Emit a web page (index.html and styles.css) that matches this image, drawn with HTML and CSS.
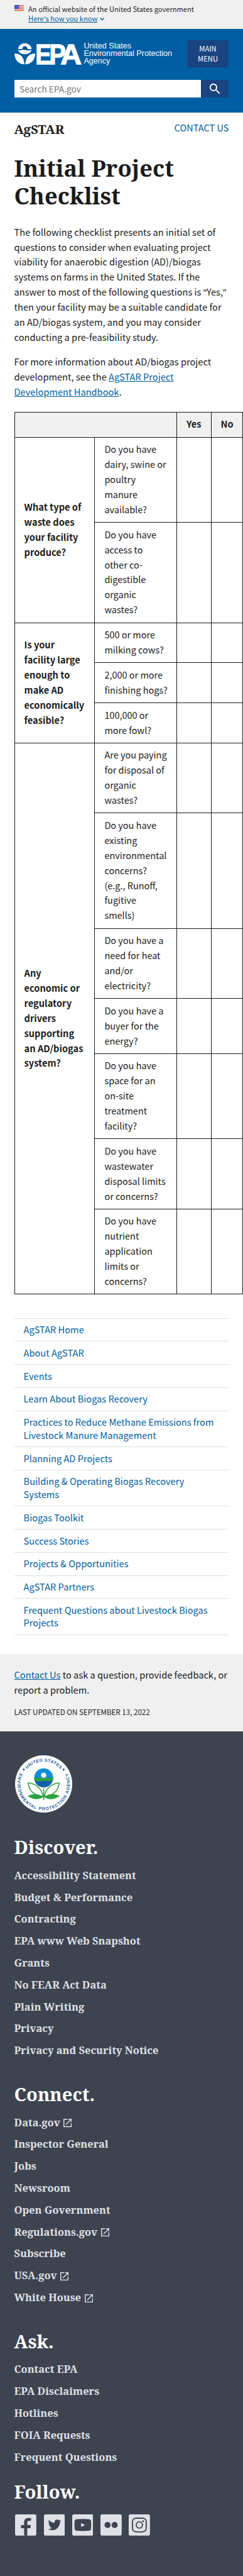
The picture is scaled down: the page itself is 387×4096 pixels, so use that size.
FILE: index.html
```html
<!DOCTYPE html>
<html lang="en">
<head>
<meta charset="utf-8">
<title>Initial Project Checklist | US EPA</title>
<link rel="stylesheet" href="styles.css">
</head>
<body>
<div class="page">
  <div class="banner">
    <svg class="flag" viewBox="0 0 16 11"><rect width="16" height="11" fill="#fff"/><path d="M0 .5h16M0 2.2h16M0 3.9h16M0 5.6h16M0 7.3h16M0 9h16M0 10.6h16" stroke="#db3e1f" stroke-width=".85"/><rect width="8" height="6.4" fill="#1e33b1"/><path d="M1 1.3h7M1.8 2.7h6M1 4h7M1.8 5.3h6" stroke="#fff" stroke-width=".7" stroke-dasharray=".7 1"/></svg>
    <div class="banner-text">
      <p>An official website of the United States government</p>
      <p><a class="link" href="#">Here's how you know</a><svg class="chevron" viewBox="0 0 8 5"><path d="M.8.8 4 3.8 7.2.8" fill="none" stroke="#005ea2" stroke-width="1.4"/></svg></p>
    </div>
  </div>

  <header class="header">
    <div class="brand-row">
      <div class="brand">
        <svg class="logo" viewBox="0 0 342 107" fill="#fff">
          <path d="M19 29a34 30 0 0 1 68 0H67a14 14 0 0 0-28 0z"/>
          <circle cx="53" cy="23" r="9" fill="#1a4480"/>
          <path d="M19 33c12 5 22-3 34 0s22 5 34-1c-2 13-16 23-34 23S21 46 19 33z"/>
          <path d="M0 52c30-2 48 16 51 54C20 106 3 86 0 52z"/>
          <path d="M106 52c-30-2-48 16-51 54 31 0 48-20 51-54z"/>
          <text class="logo-text" y="104"><tspan x="106" textLength="81" lengthAdjust="spacingAndGlyphs">E</tspan><tspan x="177" textLength="84" lengthAdjust="spacingAndGlyphs">P</tspan><tspan x="234" textLength="108" lengthAdjust="spacingAndGlyphs">A</tspan></text>
        </svg>
        <div class="brand-name">United States<br>Environmental Protection<br>Agency</div>
      </div>
      <button class="menu-button">MAIN<br>MENU</button>
    </div>
    <div class="search">
      <div class="search-input">Search EPA.gov</div>
      <button class="search-button" aria-label="Search"><svg viewBox="0 0 24 24" fill="#fff"><path d="M15.5 14h-.79l-.28-.27A6.471 6.471 0 0 0 16 9.5 6.5 6.5 0 1 0 9.5 16c1.61 0 3.09-.59 4.23-1.57l.27.28v.79l5 4.99L20.49 19l-4.99-5zm-6 0C7.01 14 5 11.99 5 9.5S7.01 5 9.5 5 14 7.01 14 9.5 11.99 14 9.5 14z"/></svg></button>
    </div>
  </header>

  <main class="main">
    <div class="site-row">
      <div class="site-name">AgSTAR</div>
      <a class="contact-link" href="#">CONTACT US</a>
    </div>
    <h1 class="title">Initial Project<br>Checklist</h1>
    <p class="para">The following checklist presents an initial set of<br>questions to consider when evaluating project<br>viability for anaerobic digestion (AD)/biogas<br>systems on farms in the United States. If the<br>answer to most of the following questions is <span class="quote">“</span>Yes,<span class="quote">”</span><br>then your facility may be a suitable candidate for<br>an AD/biogas system, and you may consider<br>conducting a pre-feasibility study.</p>
    <p class="para">For more information about AD/biogas project<br>development, see the <a class="link" href="#">AgSTAR Project<br>Development Handbook</a>.</p>

    <table class="checklist">
      <colgroup><col class="c1"><col class="c2"><col class="c3"><col class="c4"></colgroup>
      <tr class="head"><th colspan="2"></th><th>Yes</th><th>No</th></tr>
      <tr><th rowspan="2">What type of<br>waste does<br>your facility<br>produce?</th><td>Do you have<br>dairy, swine or<br>poultry<br>manure<br>available?</td><td></td><td></td></tr>
      <tr><td>Do you have<br>access to<br>other co-<br>digestible<br>organic<br>wastes?</td><td></td><td></td></tr>
      <tr><th rowspan="3">Is your<br>facility large<br>enough to<br>make AD<br>economically<br>feasible?</th><td>500 or more<br>milking cows?</td><td></td><td></td></tr>
      <tr><td>2,000 or more<br>finishing hogs?</td><td></td><td></td></tr>
      <tr><td>100,000 or<br>more fowl?</td><td></td><td></td></tr>
      <tr><th rowspan="7">Any<br>economic or<br>regulatory<br>drivers<br>supporting<br>an AD/biogas<br>system?</th><td>Are you paying<br>for disposal of<br>organic<br>wastes?</td><td></td><td></td></tr>
      <tr><td>Do you have<br>existing<br>environmental<br>concerns?<br>(e.g., Runoff,<br>fugitive<br>smells)</td><td></td><td></td></tr>
      <tr><td>Do you have a<br>need for heat<br>and/or<br>electricity?</td><td></td><td></td></tr>
      <tr><td>Do you have a<br>buyer for the<br>energy?</td><td></td><td></td></tr>
      <tr><td>Do you have<br>space for an<br>on-site<br>treatment<br>facility?</td><td></td><td></td></tr>
      <tr><td>Do you have<br>wastewater<br>disposal limits<br>or concerns?</td><td></td><td></td></tr>
      <tr><td>Do you have<br>nutrient<br>application<br>limits or<br>concerns?</td><td></td><td></td></tr>
    </table>

    <ul class="sidenav">
      <li><a href="#">AgSTAR Home</a></li>
      <li><a href="#">About AgSTAR</a></li>
      <li><a href="#">Events</a></li>
      <li><a href="#">Learn About Biogas Recovery</a></li>
      <li><a href="#">Practices to Reduce Methane Emissions from<br>Livestock Manure Management</a></li>
      <li><a href="#">Planning AD Projects</a></li>
      <li><a href="#">Building &amp; Operating Biogas Recovery<br>Systems</a></li>
      <li><a href="#">Biogas Toolkit</a></li>
      <li><a href="#">Success Stories</a></li>
      <li><a href="#">Projects &amp; Opportunities</a></li>
      <li><a href="#">AgSTAR Partners</a></li>
      <li><a href="#">Frequent Questions about Livestock Biogas<br>Projects</a></li>
    </ul>
  </main>

  <section class="feedback">
    <p class="feedback-text"><a class="link" href="#">Contact Us</a> to ask a question, provide feedback, or<br>report a problem.</p>
    <p class="updated">LAST UPDATED ON SEPTEMBER 13, 2022</p>
  </section>

  <footer class="footer">
    <svg class="seal" viewBox="0 0 290 290">
      <defs><path id="seal-top" d="M32 145a113 113 0 0 1 226 0"/><path id="seal-bottom" d="M30.7 77A133 133 0 1 0 259.3 77"/></defs>
      <circle cx="145" cy="145" r="145" fill="#fff"/>
      <g class="seal-text">
        <text><textPath href="#seal-top" startOffset="50%" text-anchor="middle" textLength="190">UNITED STATES</textPath></text>
        <text><textPath href="#seal-bottom" startOffset="50%" text-anchor="middle" textLength="530">ENVIRONMENTAL PROTECTION AGENCY</textPath></text>
      </g>
      <circle cx="44" cy="72" r="5" fill="#1b5c9e"/><circle cx="246" cy="72" r="5" fill="#1b5c9e"/>
      <circle cx="145" cy="114" r="48" fill="#0f8fd8"/>
      <path d="M97 114h96a48 48 0 0 1-96 0z" fill="#1261ad"/>
      <path d="M97 113c20 5 34-4 50-1s32 4 46 0c0 8-1 12-3 17-18 5-32-2-46 0s-30 5-44 0c-2-5-3-10-3-16z" fill="#2ca240"/>
      <circle cx="145" cy="101" r="13" fill="#fff"/>
      <g fill="none" stroke="#2ca240" stroke-width="5"><path d="M145 167v60M142 208C134 165 103 142 66 140c5 38 30 66 76 68zM148 208c8-43 39-66 76-68-5 38-30 66-76 68z"/></g>
      <path d="M142 212c-20-18-48-20-78-6 26 20 56 20 78 6zM148 212c20-18 48-20 78-6-26 20-56 20-78 6z" fill="#2ca240"/>
    </svg>

    <h2>Discover.</h2>
    <ul class="links">
      <li>Accessibility Statement</li><li>Budget &amp; Performance</li><li>Contracting</li><li>EPA www Web Snapshot</li><li>Grants</li><li>No FEAR Act Data</li><li>Plain Writing</li><li>Privacy</li><li>Privacy and Security Notice</li>
    </ul>
    <h2>Connect.</h2>
    <ul class="links">
      <li>Data.gov<svg class="ext" viewBox="3 3 18 18"><path d="M19 19H5V5h7V3H3v18h18v-9h-2v7zM14 3v2h3.59l-9.83 9.83 1.41 1.41L19 6.41V10h2V3h-7z"/></svg></li><li>Inspector General</li><li>Jobs</li><li>Newsroom</li><li>Open Government</li><li>Regulations.gov<svg class="ext" viewBox="3 3 18 18"><path d="M19 19H5V5h7V3H3v18h18v-9h-2v7zM14 3v2h3.59l-9.83 9.83 1.41 1.41L19 6.41V10h2V3h-7z"/></svg></li><li>Subscribe</li><li>USA.gov<svg class="ext" viewBox="3 3 18 18"><path d="M19 19H5V5h7V3H3v18h18v-9h-2v7zM14 3v2h3.59l-9.83 9.83 1.41 1.41L19 6.41V10h2V3h-7z"/></svg></li><li>White House<svg class="ext" viewBox="3 3 18 18"><path d="M19 19H5V5h7V3H3v18h18v-9h-2v7zM14 3v2h3.59l-9.83 9.83 1.41 1.41L19 6.41V10h2V3h-7z"/></svg></li>
    </ul>
    <h2>Ask.</h2>
    <ul class="links last">
      <li>Contact EPA</li><li>EPA Disclaimers</li><li>Hotlines</li><li>FOIA Requests</li><li>Frequent Questions</li>
    </ul>
    <h2>Follow.</h2>
    <div class="social">
      <svg viewBox="0 0 108 108"><rect width="108" height="108" rx="9" fill="#dfe1e7"/><path d="M46 108V70H30V54h16V40c0-14 8-22 23-22h12v15H71c-6 0-9 3-9 9v12h18l-2 16H62v38z" fill="#3e4350"/></svg>
      <svg viewBox="0 0 108 108"><rect width="108" height="108" rx="9" fill="#dfe1e7"/><path transform="translate(18 18) scale(2.95)" d="M23.643 4.937c-.835.37-1.732.62-2.675.733.962-.576 1.7-1.49 2.048-2.578-.9.534-1.897.922-2.958 1.13-.85-.904-2.06-1.47-3.4-1.47-2.572 0-4.658 2.086-4.658 4.66 0 .364.042.718.12 1.06-3.873-.195-7.304-2.05-9.602-4.868-.4.69-.63 1.49-.63 2.342 0 1.616.823 3.043 2.072 3.878-.764-.025-1.482-.234-2.11-.583v.06c0 2.257 1.605 4.14 3.737 4.568-.392.106-.803.162-1.227.162-.3 0-.593-.028-.877-.082.593 1.85 2.313 3.198 4.352 3.234-1.595 1.25-3.604 1.995-5.786 1.995-.376 0-.747-.022-1.112-.065 2.062 1.323 4.51 2.093 7.14 2.093 8.57 0 13.255-7.098 13.255-13.254 0-.2-.005-.402-.014-.602.91-.658 1.7-1.477 2.323-2.41z" fill="#3e4350"/></svg>
      <svg viewBox="0 0 108 108"><rect width="108" height="108" rx="9" fill="#dfe1e7"/><path d="M22 25q32-3 64 0 9 1 10 12 1 17 0 34-1 11-10 12-32 3-64 0-9-1-10-12-1-17 0-34 1-11 10-12z" fill="#3e4350"/><path d="M45 44v20l20-10z" fill="#dfe1e7"/></svg>
      <svg viewBox="0 0 108 108"><rect width="108" height="108" rx="9" fill="#dfe1e7"/><circle cx="36" cy="54" r="15.5" fill="#3e4350"/><circle cx="72" cy="54" r="15.5" fill="#3e4350"/></svg>
      <svg viewBox="0 0 108 108"><rect width="108" height="108" rx="9" fill="#dfe1e7"/><rect x="19" y="19" width="70" height="70" rx="19" fill="none" stroke="#3e4350" stroke-width="6"/><circle cx="54" cy="54" r="16" fill="none" stroke="#3e4350" stroke-width="6"/><circle cx="73" cy="35" r="4.5" fill="#3e4350"/></svg>
    </div>
  </footer>
</div>
</body>
</html>
```
FILE: styles.css
```css
* { box-sizing: border-box; margin: 0; padding: 0; }
html { background: #3e4350; }
body { overflow-x: hidden; }
.page {
  zoom: 0.9399;
  width: 411.7px;
  height: 4357.8px;
  overflow: hidden;
  background: #fff;
  color: #1b1b1b;
  font-family: "Noto Sans CJK SC", "Noto Sans", sans-serif;
  font-size: 15.55px;
  line-height: 25.44px;
}
ul { list-style: none; }
a { color: #005ea2; text-decoration: none; }
.link { text-decoration: underline; }
.quote { font-family: "Noto Sans", sans-serif; line-height: 1; }
button { border: 0; color: #fff; background: #1a4480; font-family: inherit; }

.banner { display: flex; gap: 8px; height: 49px; padding: 7px 24px 0; background: #f0f0f0; font-size: 11.85px; line-height: 16px; }
.flag { width: 16px; height: 11px; margin-top: 1px; }
.chevron { width: 8px; height: 5px; margin-left: 4px; vertical-align: 1px; }

.header { height: 141px; padding: 19px 24px 0; background: #005ea2; }
.brand-row { display: flex; justify-content: space-between; }
.brand { display: flex; gap: 4px; padding-top: 5px; }
.logo { width: 114px; height: 35.7px; overflow: visible; }
.logo-text { font: bold 141px "Liberation Sans", Arial, sans-serif; stroke: #fff; stroke-width: 4px; }
.brand-name { margin-top: -1px; color: #fff; font: 13.4px/12.7px "Liberation Sans", Arial, sans-serif; white-space: nowrap; }
.menu-button { width: 71px; height: 46px; font-size: 12px; line-height: 16px; }
.search { display: flex; margin-top: 21px; height: 30px; }
.search-input { flex: 1; padding-left: 9px; background: #fff; color: #757575; font-size: 14.6px; line-height: 30px; }
.search-button { display: flex; align-items: center; justify-content: center; width: 47px; }
.search-button svg { width: 24px; height: 24px; }

.main { height: 2608px; padding: 15px 24px 0; }
.site-row { display: flex; justify-content: space-between; height: 56px; }
.site-name { font: bold 21.7px/26px "Noto Serif", "DejaVu Serif Condensed", serif; }
.contact-link { font-size: 15.5px; line-height: 22px; }
.title { margin-bottom: 24.5px; font: bold 38.6px/47px "Noto Serif", "DejaVu Serif Condensed", serif; }
.para { margin-bottom: 16.5px; white-space: nowrap; }

.checklist { width: 387.5px; margin-top: 21px; table-layout: fixed; border-collapse: collapse; }
.c1 { width: 136px; }
.c2 { width: 139px; }
.c3 { width: 58px; }
.c4 { width: 54px; }
.checklist th, .checklist td { padding: 7px 0 8.9px 16px; border: 1px solid #1b1b1b; text-align: left; vertical-align: middle; white-space: nowrap; }
.checklist td { font-size: 15.4px; }
.head th { height: 42.4px; background: #f0f0f0; }

.sidenav { margin-top: 39.6px; border-top: 1px solid #dfe1e2; }
.sidenav li { padding: 8px 0 8px 16px; border-bottom: 1px solid #dfe1e2; line-height: 22.05px; white-space: nowrap; }

.feedback { height: 131px; padding: 23px 24px 0; background: #f0f0f0; white-space: nowrap; }
.updated { margin-top: 14.5px; font-size: 12.35px; line-height: 20px; }

.footer { padding: 41px 24px 0; background: #3e4350; color: #dfe1e7; height: 1429px; }
.seal { display: block; width: 97px; height: 97px; margin: 0 0 41px 1.5px; }
.seal-text { fill: #1b5c9e; font: bold 22px "Liberation Sans", Arial, sans-serif; }
.footer h2 { margin-bottom: 18px; color: #fff; font: bold 31px/36px "Noto Serif", "DejaVu Serif Condensed", serif; }
.links { display: flex; flex-direction: column; gap: 16px; margin-bottom: 47px; font: bold 17.5px/21px "Noto Serif", "DejaVu Serif Condensed", serif; }
.links li { white-space: nowrap; }
.links.last { margin-bottom: 31.5px; }
.ext { width: 14px; height: 14px; margin-left: 6px; vertical-align: -2px; fill: #dfe1e7; }
.social { display: flex; gap: 12px; padding: 2px 2px 0; }
.social svg { width: 36px; height: 36px; }
```
